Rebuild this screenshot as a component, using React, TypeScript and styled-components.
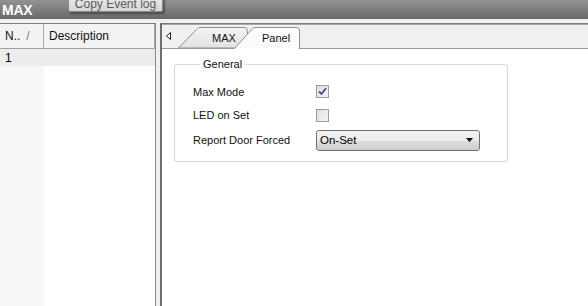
import React from "react";
import styled, { createGlobalStyle } from "styled-components";

const Global = createGlobalStyle`
  html, body { margin: 0; padding: 0; }
  body {
    width: 588px; height: 306px; overflow: hidden;
    background: #f0f0f0;
    font-family: "Liberation Sans", Arial, sans-serif;
    font-size: 11px; color: #000;
  }
`;

const Page = styled.div`
  width: 588px; height: 306px;
  display: flex; flex-direction: column;
  overflow: hidden;
`;

const TitleBar = styled.div`
  position: relative;
  height: 19px; flex: none;
  background: linear-gradient(#939393, #686868);
  display: flex; align-items: center;
  padding-left: 2px;
`;

const Title = styled.span`
  color: #fff;
  font-weight: bold;
  font-size: 14px;
  letter-spacing: -0.2px;
`;

const Tooltip = styled.div`
  position: absolute;
  left: 68px; top: -4px;
  width: 95px; height: 16px;
  box-sizing: border-box;
  background: linear-gradient(#ececec, #d4d4d4);
  border: 1px solid #8a8a8a;
  border-radius: 2px;
  box-shadow: 2px 2px 2px rgba(0,0,0,0.35);
  color: #5a5a5a;
  font-size: 12px;
  line-height: 14px;
  display: flex; align-items: center; justify-content: center;
`;

const Gap = styled.div`
  height: 4px; flex: none; background: #f0f0f0;
`;

const Main = styled.div`
  flex: 1;
  display: flex;
  min-height: 0;
`;

const LeftPane = styled.div`
  width: 155px; flex: none;
  border-top: 1px solid #7a7a7a;
  border-right: 1px solid #8a8a8a;
  background: #fff;
  display: flex; flex-direction: column;
`;

const HeaderRow = styled.div`
  height: 24px; flex: none;
  display: flex;
  background: #f3f3f3;
  border-bottom: 1px solid #a0a0a0;
`;

const HeaderCell = styled.div<{ $w?: number }>`
  ${p => (p.$w ? `width: ${p.$w}px; flex: none;` : "flex: 1;")}
  box-sizing: border-box;
  display: flex; align-items: center;
  padding-left: 5px;
  border-right: 1px solid #a8a8a8;
  font-size: 12px;
  color: #111;
`;

const SortMark = styled.span`
  margin-left: 6px;
  color: #777;
  font-size: 12px;
`;

const Body = styled.div`
  flex: 1;
  display: flex; flex-direction: column;
  background: linear-gradient(to right, #f6f6f6 0, #f6f6f6 44px, #fff 44px);
`;

const Row = styled.div`
  height: 17px;
  display: flex; align-items: center;
  background: #ececec;
  padding-left: 5px;
  font-size: 12px;
`;

const Splitter = styled.div`
  width: 4px; flex: none;
  background: #f0f0f0;
`;

const RightPane = styled.div`
  flex: 1;
  display: flex; flex-direction: column;
  border-top: 1px solid #7a7a7a;
  border-left: 2px solid #6e6e6e;
  background: #fff;
`;

const TabStrip = styled.div`
  height: 25px; flex: none;
  box-sizing: border-box;
  background: #f0f0f0;
  border-top: 1px solid #a8a8a8;
  border-bottom: 1px solid #9a9a9a;
  display: flex; align-items: flex-end;
  padding-left: 4px;
`;

const ArrowBtn = styled.div`
  width: 8px; height: 21px;
  display: flex; align-items: center;
  align-self: flex-start;
  margin-right: 4px;
`;

const Tab = styled.div<{ $active?: boolean; $w: number; $overlap?: number; $pad: number }>`
  position: relative;
  width: ${p => p.$w}px; height: ${p => (p.$active ? 22 : 21)}px;
  margin-left: ${p => -(p.$overlap || 0)}px;
  margin-bottom: ${p => (p.$active ? -1 : 0)}px;
  z-index: ${p => (p.$active ? 2 : 1)};
  display: flex; align-items: center;
  padding-left: ${p => p.$pad}px;
  padding-bottom: ${p => (p.$active ? 1 : 0)}px;
  box-sizing: border-box;
  font-size: 11px;
  color: #111;
`;

const TabShape = styled.svg`
  position: absolute; left: 0; top: 0;
  z-index: -1;
`;

const TabLabel = styled.span`
  position: relative;
`;

const Content = styled.div`
  flex: 1;
  padding: 9px 0 0 12px;
  background: #fff;
`;

const GroupBox = styled.fieldset`
  width: 334px;
  box-sizing: border-box;
  margin: 0;
  height: 104px;
  border: 1px solid #d8d8d8;
  border-radius: 3px;
  padding: 10px 0 0 18px;
`;

const Legend = styled.legend`
  padding: 0 3px;
  margin-left: 7px;
  font-size: 11px;
  color: #111;
`;

const Form = styled.div`
  display: grid;
  grid-template-columns: 123px auto;
  grid-template-rows: 23px 24px 26px;
  align-items: center;
`;

const Label = styled.span`
  font-size: 11px;
  color: #111;
`;

const Check = styled.div`
  width: 13px; height: 13px;
  box-sizing: border-box;
  border: 1px solid #9c9c9c;
  background: linear-gradient(135deg, #dedede, #f6f6f6);
  display: flex; align-items: center; justify-content: center;
`;

const Select = styled.div`
  width: 164px; height: 21px;
  box-sizing: border-box;
  border: 1px solid #707070;
  border-radius: 3px;
  background: linear-gradient(#f3f3f3 0%, #ebebeb 50%, #dddddd 51%, #cfcfcf 100%);
  display: flex; align-items: center; justify-content: space-between;
  padding: 0 6px 0 3px;
  font-size: 11.5px;
`;

const App: React.FC = () => (
  <Page>
    <Global />
    <TitleBar>
      <Title>MAX</Title>
      <Tooltip>Copy Event log</Tooltip>
    </TitleBar>
    <Gap />
    <Main>
      <LeftPane>
        <HeaderRow>
          <HeaderCell $w={44}>
            N..<SortMark>/</SortMark>
          </HeaderCell>
          <HeaderCell>Description</HeaderCell>
        </HeaderRow>
        <Body>
          <Row>1</Row>
        </Body>
      </LeftPane>
      <Splitter />
      <RightPane>
        <TabStrip>
          <ArrowBtn>
            <svg width="5" height="8" viewBox="0 0 5 8">
              <path d="M4.5 0.5 L0.5 4 L4.5 7.5 Z" fill="#fff" stroke="#222" strokeWidth="1" />
            </svg>
          </ArrowBtn>
          <Tab $w={72} $pad={34}>
            <TabShape width="72" height="21" viewBox="0 0 72 21">
              <defs>
                <linearGradient id="tg" x1="0" y1="0" x2="0" y2="1">
                  <stop offset="0" stopColor="#f4f4f4" />
                  <stop offset="1" stopColor="#e2e2e2" />
                </linearGradient>
              </defs>
              <path d="M0.5 21 L19.5 1.5 Q20.5 0.5 22 0.5 L66 0.5 Q68 0.5 69 2 L71.5 21 Z" fill="url(#tg)" stroke="#8e8e8e" />
            </TabShape>
            <TabLabel>MAX</TabLabel>
          </Tab>
          <Tab $w={66} $active $overlap={16} $pad={28}>
            <TabShape width="66" height="22" viewBox="0 0 66 22">
              <path d="M0.5 22 L0.5 21.5 L18.5 1.5 Q19.5 0.5 21 0.5 L62.5 0.5 Q65.5 0.5 65.5 3 L65.5 22" fill="#fcfcfc" stroke="#8e8e8e" />
            </TabShape>
            <TabLabel>Panel</TabLabel>
          </Tab>
        </TabStrip>
        <Content>
          <GroupBox>
            <Legend>General</Legend>
            <Form>
              <Label>Max Mode</Label>
              <Check>
                <svg width="9" height="9" viewBox="0 0 9 9">
                  <path d="M1 4.5 L3.5 7 L8 1.2" fill="none" stroke="#3b4f86" strokeWidth="1.8" />
                </svg>
              </Check>
              <Label>LED on Set</Label>
              <Check />
              <Label>Report Door Forced</Label>
              <Select>
                <span>On-Set</span>
                <svg width="7" height="4" viewBox="0 0 7 4">
                  <path d="M0 0 L7 0 L3.5 4 Z" fill="#000" />
                </svg>
              </Select>
            </Form>
          </GroupBox>
        </Content>
      </RightPane>
    </Main>
  </Page>
);

export default App;
